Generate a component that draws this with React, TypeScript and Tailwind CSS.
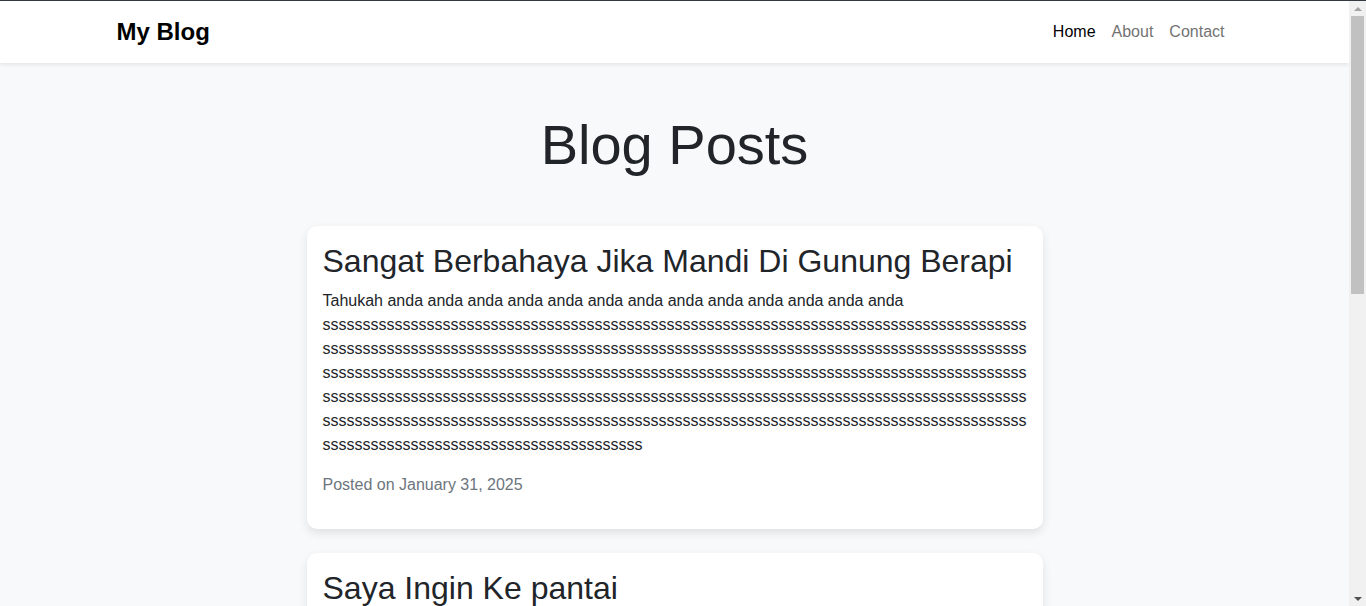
const posts = [
  {
    title: "Sangat Berbahaya Jika Mandi Di Gunung Berapi",
    body:
      "Tahukah " +
      Array(13).fill("anda").join(" ") +
      " " +
      "s".repeat(480),
    date: "January 31, 2025",
  },
  {
    title: "Saya Ingin Ke pantai",
    body: "Liburan kali ini saya ingin pergi ke pantai bersama keluarga dan teman-teman.",
    date: "January 30, 2025",
  },
  {
    title: "Belajar Membuat Blog",
    body: "Hari ini saya belajar membuat blog sederhana menggunakan HTML dan CSS.",
    date: "January 29, 2025",
  },
]

function Scrollbar() {
  return (
    <div className="flex w-[17px] shrink-0 flex-col items-center bg-[#f1f1f1]">
      <div className="flex h-[15px] items-center justify-center">
        <div className="h-0 w-0 border-x-[4px] border-b-[4px] border-x-transparent border-b-[#a3a3a3]" />
      </div>
      <div className="h-[278px] w-[13px] bg-[#c1c1c1]" />
      <div className="flex-1" />
      <div className="flex h-[15px] items-center justify-center">
        <div className="h-0 w-0 border-x-[4px] border-t-[4px] border-x-transparent border-t-[#505050]" />
      </div>
    </div>
  )
}

export default function App() {
  return (
    <div className="flex h-screen flex-col border-t border-[#343a40] font-['Liberation_Sans',Arial,sans-serif] text-[#212529]">
      <div className="flex min-h-0 flex-1">
        <div className="min-w-0 flex-1 overflow-hidden bg-[#f8f9fa]">
          {/* Navbar */}
          <nav className="bg-white shadow-[0_2px_4px_rgba(0,0,0,0.08)]">
            <div className="mx-auto flex h-[62px] max-w-[1140px] items-center justify-between px-3">
              <a href="#" className="text-[24px] font-bold text-black">
                My Blog
              </a>
              <ul className="flex text-[16px]">
                <li>
                  <a href="#" className="px-2 text-black">
                    Home
                  </a>
                </li>
                <li>
                  <a href="#" className="px-2 text-[#737373]">
                    About
                  </a>
                </li>
                <li>
                  <a href="#" className="px-2 text-[#737373]">
                    Contact
                  </a>
                </li>
              </ul>
            </div>
          </nav>

          {/* Posts */}
          <main className="mx-auto mt-12 max-w-[1140px] px-3 pb-12">
            <h1 className="mb-12 text-center text-[56px] leading-[1.2]">Blog Posts</h1>

            <div className="mx-auto max-w-[736px]">
              {posts.map((post) => (
                <div
                  key={post.title}
                  className="mb-6 rounded-[10px] bg-white p-4 shadow-[0_4px_10px_rgba(0,0,0,0.1)]"
                >
                  <h2 className="mb-2 text-[32px] leading-[1.2]">{post.title}</h2>
                  <p className="mb-4 break-words text-[16px] leading-6">{post.body}</p>
                  <p className="mb-4 text-[16px] leading-6 text-[#6c757d]">Posted on {post.date}</p>
                </div>
              ))}
            </div>
          </main>
        </div>
        <Scrollbar />
      </div>
    </div>
  )
}
